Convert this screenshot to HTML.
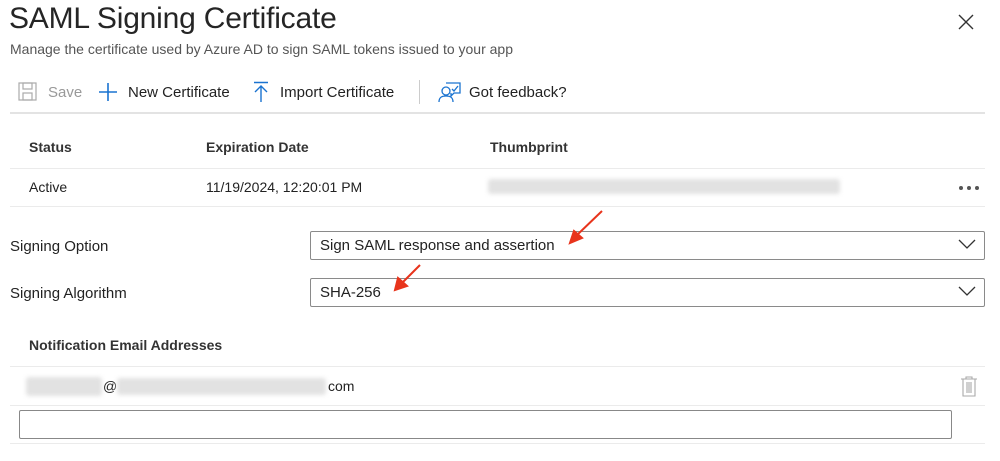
<!DOCTYPE html>
<html><head><style>
*{margin:0;padding:0;box-sizing:border-box}
body{width:1000px;height:461px;background:#fff;font-family:"Liberation Sans",sans-serif;color:#222;position:relative;overflow:hidden}
.a{position:absolute;white-space:nowrap}
.hl{position:absolute;left:10px;width:975px;height:1px;background:#ebebeb}
.box{position:absolute;border:1px solid #8a8a8a;border-radius:2px;background:#fff}
.blur{position:absolute;background:#e2e2e2;filter:blur(2px);border-radius:3px}
</style></head><body>
<div class="a" style="left:9px;top:2px;font-size:30px;color:#252525;letter-spacing:-0.2px">SAML Signing Certificate</div>
<div class="a" style="left:10px;top:41px;font-size:14px;color:#555">Manage the certificate used by Azure AD to sign SAML tokens issued to your app</div>
<svg class="a" style="left:18px;top:82px" width="20" height="20" viewBox="0 0 20 20" fill="none" stroke="#aaa" stroke-width="1.2"><rect x="1" y="1" width="17" height="17"/><rect x="5" y="1" width="9" height="6"/><rect x="5" y="11" width="9" height="7"/></svg>
<div class="a" style="left:48px;top:84px;font-size:15px;color:#999">Save</div>
<svg class="a" style="left:98px;top:82px" width="20" height="20" stroke="#1a73d0" stroke-width="1.6"><path d="M10 1V19M1 10H19"/></svg>
<div class="a" style="left:128px;top:84px;font-size:15px">New Certificate</div>
<svg class="a" style="left:252px;top:81px" width="18" height="22" fill="none" stroke="#1a73d0" stroke-width="1.4"><path d="M2 1.5H16M9 21V5M3 11L9 5L15 11"/></svg>
<div class="a" style="left:280px;top:84px;font-size:15px">Import Certificate</div>
<div class="a" style="left:419px;top:80px;width:1px;height:24px;background:#ccc"></div>
<svg class="a" style="left:438px;top:81px" width="24" height="22" fill="none" stroke="#1a73d0" stroke-width="1.3"><path d="M8 2H22V12H16L13 15V12"/><circle cx="8" cy="10" r="4"/><path d="M1 21C1 16 4 15 8 15S15 16 15 21"/><path d="M14 8L16 10L20 5"/></svg>
<div class="a" style="left:469px;top:84px;font-size:15px">Got feedback?</div>
<div class="hl" style="top:112px;height:2px;background:#e3e3e3"></div>
<div class="a" style="left:29px;top:139px;font-size:14px;font-weight:bold;color:#333">Status</div>
<div class="a" style="left:206px;top:139px;font-size:14px;font-weight:bold;color:#333">Expiration Date</div>
<div class="a" style="left:490px;top:139px;font-size:14px;font-weight:bold;color:#333">Thumbprint</div>
<div class="hl" style="top:168px"></div>
<div class="a" style="left:29px;top:179px;font-size:14px">Active</div>
<div class="a" style="left:206px;top:179px;font-size:14px">11/19/2024, 12:20:01 PM</div>
<div class="blur" style="left:488px;top:179px;width:352px;height:15px"></div>
<svg class="a" style="left:958px;top:185px" width="22" height="6" fill="#555"><circle cx="3" cy="3" r="2"/><circle cx="11" cy="3" r="2"/><circle cx="19" cy="3" r="2"/></svg>
<div class="hl" style="top:206px"></div>
<svg class="a" style="left:956px;top:12px" width="20" height="20" stroke="#333" stroke-width="1.4"><path d="M3 3L17 17M17 3L3 17"/></svg>
<div class="a" style="left:10px;top:238px;font-size:15px">Signing Option</div>
<div class="box" style="left:310px;top:231px;width:675px;height:29px"></div>
<div class="a" style="left:320px;top:237px;font-size:15px">Sign SAML response and assertion</div>
<svg class="a" style="left:958px;top:238px" width="18" height="12" fill="none" stroke="#333" stroke-width="1.3"><path d="M1 2L9 10L17 2"/></svg>
<div class="a" style="left:10px;top:285px;font-size:15px">Signing Algorithm</div>
<div class="box" style="left:310px;top:278px;width:675px;height:29px"></div>
<div class="a" style="left:320px;top:284px;font-size:15px">SHA-256</div>
<svg class="a" style="left:958px;top:285px" width="18" height="12" fill="none" stroke="#333" stroke-width="1.3"><path d="M1 2L9 10L17 2"/></svg>
<svg class="a" style="left:390px;top:208px" width="230" height="90" fill="#e8341c" stroke="#e8341c" stroke-width="2"><path d="M212 3L186 28"/><path d="M180 35L184 23L192 30Z"/><path d="M30 57L10 77"/><path d="M5 82L8 70L17 78Z"/></svg>
<div class="a" style="left:29px;top:337px;font-size:14px;font-weight:bold;color:#333">Notification Email Addresses</div>
<div class="hl" style="top:366px"></div>
<div class="blur" style="left:26px;top:377px;width:76px;height:19px"></div>
<div class="a" style="left:103px;top:378px;font-size:14px">@</div>
<div class="blur" style="left:117px;top:378px;width:209px;height:17px"></div>
<div class="a" style="left:328px;top:378px;font-size:14px">com</div>
<svg class="a" style="left:960px;top:376px" width="18" height="22" fill="none" stroke="#aaa" stroke-width="1.1"><path d="M1 3H17M6 3V1H12V3M3 3V20H15V3M7 6V17M9 6V17M11 6V17"/></svg>
<div class="hl" style="top:405px"></div>
<div class="box" style="left:19px;top:410px;width:933px;height:29px;border-color:#888"></div>
<div class="hl" style="top:443px"></div>
</body></html>
